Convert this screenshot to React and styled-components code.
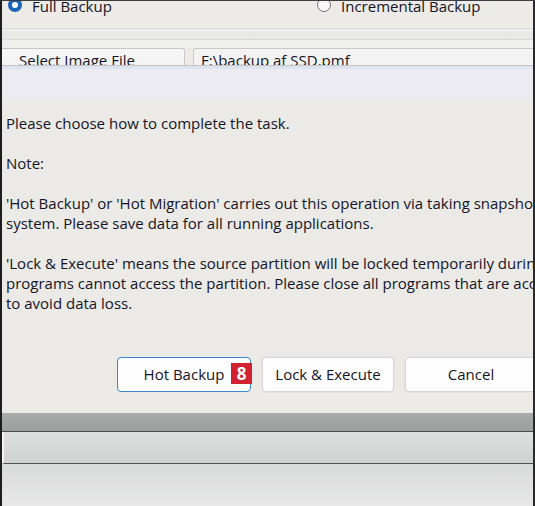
import React from "react";
import styled, { createGlobalStyle } from "styled-components";

const GlobalStyle = createGlobalStyle`
  html, body { margin: 0; padding: 0; background: #ebeae7; }
  body { overflow: hidden; }
  * { box-sizing: border-box; }
`;

const Frame = styled.div`
  width: 535px;
  height: 506px;
  border-left: 2px solid #1d1d1f;
  border-right: 2px solid #2a2a2c;
  border-top: 1px solid #3c3c3e;
  overflow: hidden;
  display: flex;
  flex-direction: column;
  background: #ebeae7;
  font-family: "Open Sans", "Noto Sans", sans-serif;
  font-size: 15px;
  color: #141426;
`;

const BackWindow = styled.div`
  height: 64px;
  flex: none;
  overflow: hidden;
  background: #ecebe8;
  display: flex;
  flex-direction: column;
`;

const RadioRow = styled.div`
  display: grid;
  grid-template-columns: 309px 1fr;
  margin-top: -5px;
  padding-left: 6px;
  height: 20px;
  line-height: 20px;
`;

const RadioOption = styled.label`
  display: flex;
  align-items: center;
  gap: 10px;
  white-space: nowrap;
`;

const RadioDot = styled.span`
  width: 14px;
  height: 14px;
  flex: none;
  border-radius: 50%;
  margin-top: -3px;
  background: ${(p) => (p.$checked ? "#fff" : "#f7f7f7")};
  border: ${(p) => (p.$checked ? "4px solid #1b64b8" : "1px solid #77777a")};
`;

const SeparatorBand = styled.div`
  margin-top: 12px;
  height: 20px;
  flex: none;
  background: linear-gradient(
    to bottom,
    #e2e2e0 0px,
    #e2e2e0 2px,
    #fbfbfb 2px,
    #fbfbfb 3px,
    #e7e7e5 3px,
    #e9e9e7 11px,
    #d9d9d8 11px,
    #d9d9d8 12px,
    #efefed 12px
  );
`;

const FileRow = styled.div`
  display: flex;
  gap: 8px;
  height: 30px;
  flex: none;
`;

const SelectButton = styled.div`
  width: 183px;
  flex: none;
  border-top: 1px solid #c6c6c6;
  border-right: 1px solid #c6c6c6;
  border-top-right-radius: 3px;
  background: linear-gradient(#f7f7f7, #efefef);
  padding: 1px 0 0 17px;
  line-height: 20px;
  white-space: nowrap;
`;

const PathField = styled.div`
  flex: 1;
  border-top: 1px solid #c9c9c9;
  border-left: 1px solid #c9c9c9;
  border-top-left-radius: 3px;
  background: #f3f3f3;
  padding: 1px 0 0 7px;
  line-height: 20px;
  white-space: nowrap;
`;

const Dialog = styled.div`
  height: 348px;
  flex: none;
  display: flex;
  flex-direction: column;
`;

const TitleBar = styled.div`
  height: 34px;
  flex: none;
  border-top: 1px solid #c4c4c6;
  background: linear-gradient(
    to bottom,
    #dbe4ee 0px,
    #dde6f0 3px,
    #ecebf1 3px,
    #ecebf1 100%
  );
`;

const DialogBody = styled.div`
  flex: 1;
  background: #ebeae7;
  padding: 14px 0 0 4px;
  display: flex;
  flex-direction: column;
`;

const Message = styled.div`
  display: flex;
  flex-direction: column;
  gap: 20px;
  line-height: 20px;
  white-space: nowrap;
`;

const Para = styled.p`
  margin: 0;
`;

const ButtonRow = styled.div`
  display: flex;
  gap: 11px;
  margin: 44px 0 0 111px;
`;

const DialogButton = styled.button`
  position: relative;
  flex: none;
  width: ${(p) => p.$w}px;
  height: 35px;
  border-radius: 4px;
  background: #fdfdfd;
  font: inherit;
  color: inherit;
  padding: 0 0 2px;
  border: ${(p) => (p.$default ? "1.5px solid #3a86cf" : "1px solid #d6d6d6")};
  box-shadow: ${(p) => (p.$default ? "none" : "0 0 0 1px #e4e4e2")};
`;

const Badge = styled.span`
  position: absolute;
  top: 5px;
  right: -2px;
  width: 21px;
  height: 21px;
  background: #d1222f;
  color: #fff;
  font-family: "Open Sans", sans-serif;
  font-weight: 700;
  font-size: 17px;
  line-height: 21px;
  text-align: center;
`;

const GrayBand = styled.div`
  height: 18px;
  flex: none;
  background: linear-gradient(#a9abab, #9d9f9f);
  border-bottom: 1px solid #4a4c4c;
  box-sizing: content-box;
`;

const Strip = styled.div`
  height: 31px;
  flex: none;
  background: linear-gradient(#dedfdf, #d0d1d1);
  border-left: 2px solid #f2f2f2;
  border-bottom: 1px solid #505252;
  box-sizing: content-box;
`;

const Floor = styled.div`
  flex: 1;
  background: linear-gradient(#d9dada, #e8e8e8);
`;

export default function App() {
  return (
    <>
      <GlobalStyle />
      <Frame>
        <BackWindow>
          <RadioRow>
            <RadioOption>
              <RadioDot $checked />
              Full Backup
            </RadioOption>
            <RadioOption>
              <RadioDot />
              Incremental Backup
            </RadioOption>
          </RadioRow>
          <SeparatorBand />
          <FileRow>
            <SelectButton>Select Image File</SelectButton>
            <PathField>F:\backup af SSD.pmf</PathField>
          </FileRow>
        </BackWindow>
        <Dialog>
          <TitleBar />
          <DialogBody>
            <Message>
              <Para>Please choose how to complete the task.</Para>
              <Para>Note:</Para>
              <Para>
                'Hot Backup' or 'Hot Migration' carries out this operation via taking snapshot of the
                <br />
                system. Please save data for all running applications.
              </Para>
              <Para>
                'Lock &amp; Execute' means the source partition will be locked temporarily during the operation, so
                <br />
                programs cannot access the partition. Please close all programs that are accessing the partition
                <br />
                to avoid data loss.
              </Para>
            </Message>
            <ButtonRow>
              <DialogButton $w={134} $default>
                Hot Backup
                <Badge>8</Badge>
              </DialogButton>
              <DialogButton $w={132}>Lock &amp; Execute</DialogButton>
              <DialogButton $w={132}>Cancel</DialogButton>
            </ButtonRow>
          </DialogBody>
        </Dialog>
        <GrayBand />
        <Strip />
        <Floor />
      </Frame>
    </>
  );
}
